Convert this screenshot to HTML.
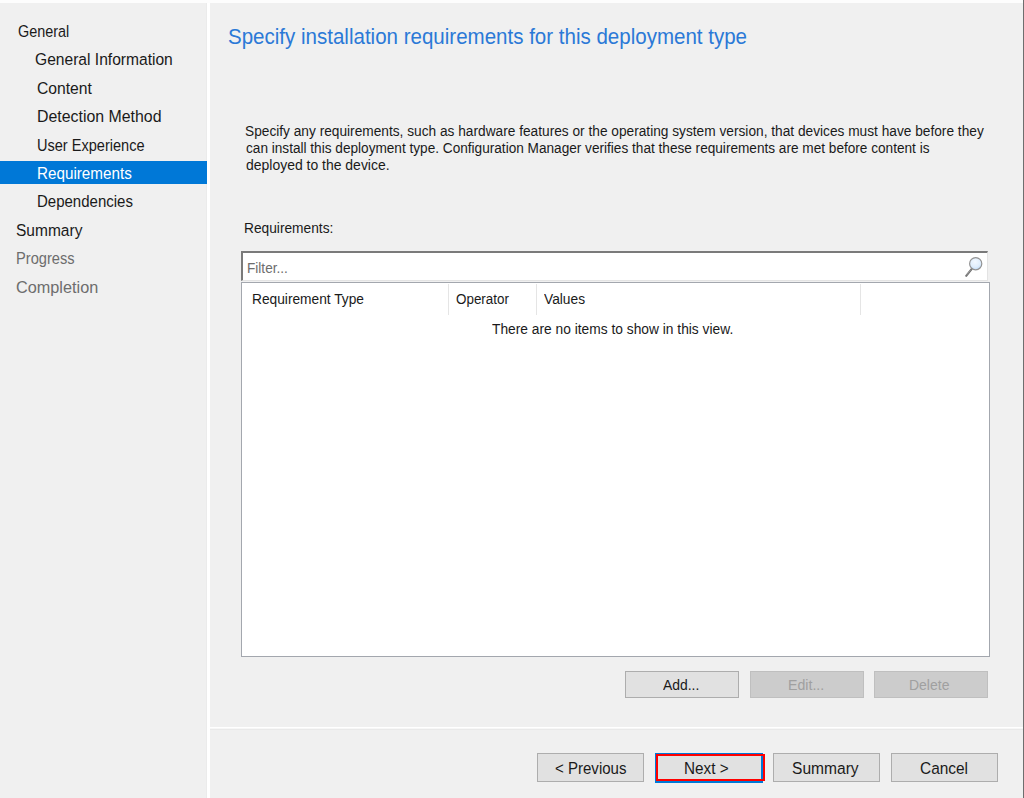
<!DOCTYPE html>
<html><head><meta charset="utf-8"><style>
html,body{margin:0;padding:0;}
body{width:1024px;height:798px;background:#f0f0f0;position:relative;overflow:hidden;font-family:"Liberation Sans",sans-serif;}
.t{position:absolute;white-space:nowrap;line-height:1;transform-origin:0 0;}
.b{position:absolute;}
</style></head><body>
<div class="b" style="left:0px;top:0px;width:1024px;height:3px;background:#fdfdfd;"></div>
<div class="b" style="left:1023px;top:0px;width:1px;height:798px;background:#6e6e6e;"></div>
<div class="b" style="left:206px;top:3px;width:1px;height:795px;background:#ebebeb;"></div>
<div class="b" style="left:207px;top:3px;width:3px;height:795px;background:#fff;"></div>
<div class="b" style="left:210px;top:727px;width:813px;height:1px;background:#fff;"></div>
<div class="b" style="left:210px;top:728px;width:813px;height:1px;background:#f7f7f7;"></div>
<div class="b" style="left:210px;top:729px;width:813px;height:1px;background:#e9e9e9;"></div>
<div class="b" style="left:0px;top:161px;width:207px;height:23px;background:#0078d7;"></div>
<div class="t" style="left:17.51px;top:22.60px;font-size:16.3px;color:#1a1a1a;transform:scaleX(0.8840)">General</div>
<div class="t" style="left:35.39px;top:51.08px;font-size:16.3px;color:#1a1a1a;transform:scaleX(0.9576)">General Information</div>
<div class="t" style="left:36.67px;top:79.56px;font-size:16.3px;color:#1a1a1a;transform:scaleX(0.9626)">Content</div>
<div class="t" style="left:36.67px;top:108.04px;font-size:16.3px;color:#1a1a1a;transform:scaleX(0.9758)">Detection Method</div>
<div class="t" style="left:36.67px;top:136.52px;font-size:16.3px;color:#1a1a1a;transform:scaleX(0.8936)">User Experience</div>
<div class="t" style="left:36.67px;top:165.00px;font-size:16.3px;color:#fff;transform:scaleX(0.9356)">Requirements</div>
<div class="t" style="left:36.67px;top:193.48px;font-size:16.3px;color:#1a1a1a;transform:scaleX(0.9214)">Dependencies</div>
<div class="t" style="left:15.93px;top:221.96px;font-size:16.3px;color:#1a1a1a;transform:scaleX(0.9536)">Summary</div>
<div class="t" style="left:16.35px;top:250.44px;font-size:16.3px;color:#6d6d6d;transform:scaleX(0.9000)">Progress</div>
<div class="t" style="left:16.35px;top:278.92px;font-size:16.3px;color:#6d6d6d;transform:scaleX(0.9984)">Completion</div>
<div class="t" style="left:227.99px;top:25.77px;font-size:22px;color:#2b79d7;transform:scaleX(0.9328)">Specify installation requirements for this deployment type</div>
<div class="t" style="left:244.67px;top:123.25px;font-size:15.3px;color:#1a1a1a;transform:scaleX(0.8957)">Specify any requirements, such as hardware features or the operating system version, that devices must have before they</div>
<div class="t" style="left:245.67px;top:139.90px;font-size:15.3px;color:#1a1a1a;transform:scaleX(0.8902)">can install this deployment type. Configuration Manager verifies that these requirements are met before content is</div>
<div class="t" style="left:245.67px;top:156.55px;font-size:15.3px;color:#1a1a1a;transform:scaleX(0.9127)">deployed to the device.</div>
<div class="t" style="left:244.35px;top:219.65px;font-size:15.3px;color:#1a1a1a;transform:scaleX(0.8983)">Requirements:</div>
<div class="b" style="left:241px;top:251px;width:747px;height:30px;background:#fff;border-top:2px solid #7a7a7a;border-left:2px solid #7a7a7a;border-right:1px solid #e3e3e3;border-bottom:1px solid #e3e3e3;box-sizing:border-box;"></div>
<div class="t" style="left:247.03px;top:260.25px;font-size:15.3px;color:#6d6d6d;transform:scaleX(0.8894)">Filter...</div>
<svg class="b" style="left:962px;top:254px" width="22" height="24" viewBox="0 0 22 24">
<defs><radialGradient id="g" cx="0.45" cy="0.35" r="0.7"><stop offset="0" stop-color="#f2f8ff"/><stop offset="0.6" stop-color="#e0eefc"/><stop offset="1" stop-color="#b9d6f6"/></radialGradient></defs>
<line x1="4.2" y1="21.8" x2="9.8" y2="14.8" stroke="#707070" stroke-width="2.1" stroke-linecap="round"/>
<line x1="4.6" y1="21.0" x2="8.6" y2="16.0" stroke="#b0b0b0" stroke-width="0.6" stroke-linecap="round"/>
<circle cx="13.7" cy="9.7" r="6.1" fill="url(#g)" stroke="#939393" stroke-width="1.2"/>
</svg>
<div class="b" style="left:241px;top:282px;width:749px;height:375px;background:#fff;border:1px solid #a3a7ae;box-sizing:border-box;"></div>
<div class="b" style="left:448px;top:284px;width:1px;height:31px;background:#e5e5e5;"></div>
<div class="b" style="left:536px;top:284px;width:1px;height:31px;background:#e5e5e5;"></div>
<div class="b" style="left:860px;top:284px;width:1px;height:31px;background:#e5e5e5;"></div>
<div class="t" style="left:251.67px;top:291.45px;font-size:15.3px;color:#1a1a1a;transform:scaleX(0.8980)">Requirement Type</div>
<div class="t" style="left:455.99px;top:291.45px;font-size:15.3px;color:#1a1a1a;transform:scaleX(0.8766)">Operator</div>
<div class="t" style="left:544.31px;top:291.45px;font-size:15.3px;color:#1a1a1a;transform:scaleX(0.8991)">Values</div>
<div class="t" style="left:491.67px;top:321.35px;font-size:15.3px;color:#1a1a1a;transform:scaleX(0.9007)">There are no items to show in this view.</div>
<div class="b" style="left:625px;top:671px;width:114px;height:27px;background:#e1e1e1;border:1px solid #adadad;box-sizing:border-box;"></div>
<div class="t" style="left:662.71px;top:677.25px;font-size:15.3px;color:#1a1a1a;transform:scaleX(0.9089)">Add...</div>
<div class="b" style="left:750px;top:671px;width:114px;height:27px;background:#cccccc;border:1px solid #bfbfbf;box-sizing:border-box;"></div>
<div class="t" style="left:788.35px;top:677.25px;font-size:15.3px;color:#a0a0a0;transform:scaleX(0.9249)">Edit...</div>
<div class="b" style="left:874px;top:671px;width:114px;height:27px;background:#cccccc;border:1px solid #bfbfbf;box-sizing:border-box;"></div>
<div class="t" style="left:909.39px;top:677.25px;font-size:15.3px;color:#a0a0a0;transform:scaleX(0.9140)">Delete</div>
<div class="b" style="left:537px;top:753px;width:107px;height:29px;background:#e1e1e1;border:1px solid #adadad;box-sizing:border-box;"></div>
<div class="t" style="left:554.87px;top:759.50px;font-size:16.3px;color:#1a1a1a;transform:scaleX(0.9238)">&lt; Previous</div>
<div class="b" style="left:655px;top:753px;width:108px;height:30px;background:#e1e1e1;border:1px solid #0078d7;box-sizing:border-box;border-width:1px 2px 2px 1px;"></div>
<div class="t" style="left:684.39px;top:759.50px;font-size:16.3px;color:#1a1a1a;transform:scaleX(0.9395)">Next &gt;</div>
<div class="b" style="left:656px;top:754px;width:109px;height:27px;border:2px solid #ff0000;box-sizing:border-box;"></div>
<div class="b" style="left:773px;top:753px;width:107px;height:29px;background:#e1e1e1;border:1px solid #adadad;box-sizing:border-box;"></div>
<div class="t" style="left:791.63px;top:759.50px;font-size:16.3px;color:#1a1a1a;transform:scaleX(0.9566)">Summary</div>
<div class="b" style="left:891px;top:753px;width:107px;height:29px;background:#e1e1e1;border:1px solid #adadad;box-sizing:border-box;"></div>
<div class="t" style="left:920.03px;top:759.50px;font-size:16.3px;color:#1a1a1a;transform:scaleX(0.9480)">Cancel</div>
</body></html>
